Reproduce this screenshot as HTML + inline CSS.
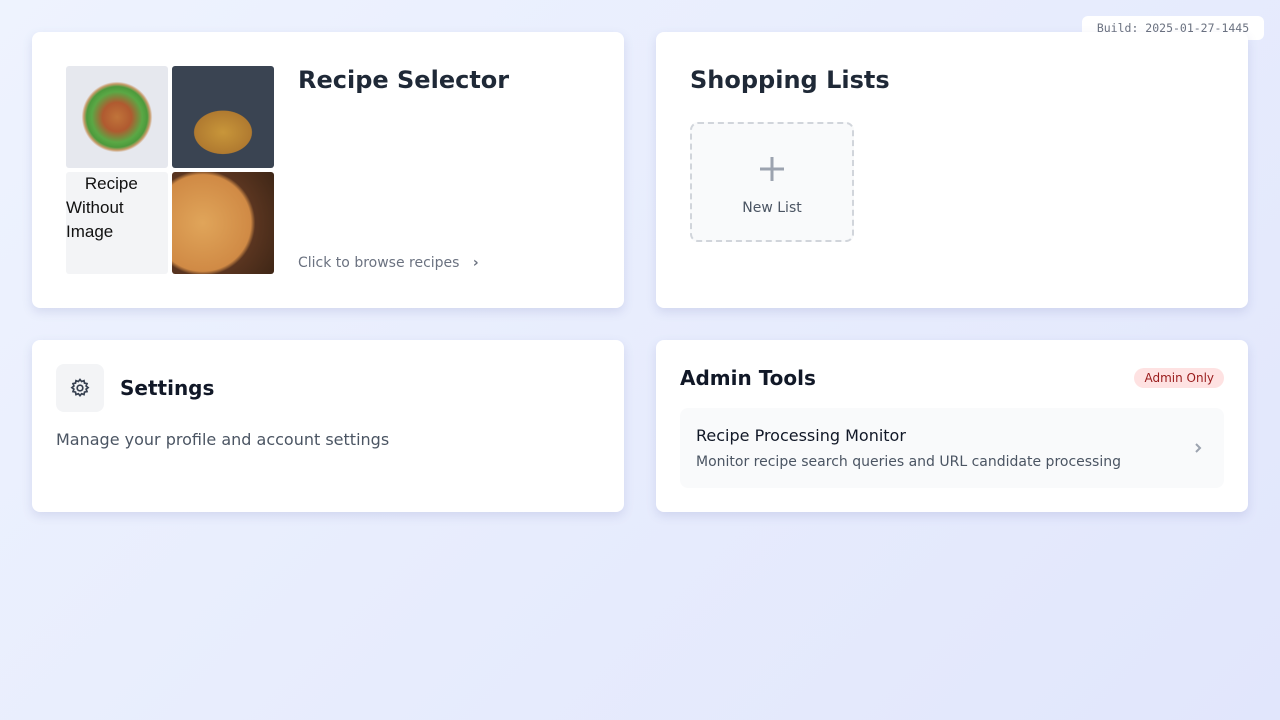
<!DOCTYPE html>
<html><head><style>
*{box-sizing:border-box;margin:0;padding:0}
body{width:1280px;height:720px;font-family:"DejaVu Sans","Liberation Sans",sans-serif;background:linear-gradient(135deg,#eef3fe,#e1e6fc);position:relative;overflow:hidden}
.card{position:absolute;background:#fff;border-radius:8px;box-shadow:0 4px 10px rgba(80,90,160,.15)}
.build{position:absolute;left:1082px;top:16px;width:182px;height:24px;background:#fff;border-radius:6px;font-family:"DejaVu Sans Mono",monospace;font-size:11.5px;color:#6b7280;line-height:24px;text-align:center}
.img{position:absolute;width:102px;height:102px;border-radius:3px;overflow:hidden}
</style></head><body>
<div class="build">Build: 2025-01-27-1445</div>

<div class="card" style="left:32px;top:32px;width:592px;height:276px">
 <div class="img" style="left:34px;top:34px;background:radial-gradient(circle at 50% 50%,#c0743a 0,#b05a30 20%,#5aa845 35%,#4c9a3c 42%,#c89a68 46%,#e6e8ee 49%)"></div>
 <div class="img" style="left:140px;top:34px;background:radial-gradient(ellipse 40% 30% at 50% 65%,#c8963a 0,#b07a30 70%,transparent 72%),#3a4452"></div>
 <div class="img" style="left:34px;top:140px;background:#f3f4f6;font-family:'Liberation Sans',sans-serif;font-size:17px;line-height:24px;color:#111">&nbsp;&nbsp;&nbsp;&nbsp;Recipe<br>Without<br>Image</div>
 <div class="img" style="left:140px;top:140px;background:radial-gradient(circle at 30% 50%,#e0a55a 0,#d08a45 55%,#5a3520 60%,#3e2616 100%)"></div>
 <div style="position:absolute;left:266px;top:34px;font-size:24px;font-weight:bold;color:#1f2937">Recipe Selector</div>
 <div style="position:absolute;left:266px;top:223px;font-size:14px;color:#6b7280">Click to browse recipes&nbsp;&nbsp;&nbsp;<b>›</b></div>
</div>

<div class="card" style="left:656px;top:32px;width:592px;height:276px">
 <div style="position:absolute;left:34px;top:34px;font-size:24px;font-weight:bold;color:#1f2937">Shopping Lists</div>
 <div style="position:absolute;left:34px;top:90px;width:164px;height:120px;border:2px dashed #d1d5db;border-radius:8px;background:#f9fafb;text-align:center">
  <svg width="30" height="30" viewBox="0 0 30 30" style="margin-top:30px;display:block;margin-left:auto;margin-right:auto"><path d="M15 3v24M3 15h24" stroke="#9ca3af" stroke-width="3"/></svg>
  <div style="font-size:14px;color:#4b5563;margin-top:16px">New List</div>
 </div>
</div>

<div class="card" style="left:32px;top:340px;width:592px;height:172px">
 <div style="position:absolute;left:24px;top:24px;width:48px;height:48px;border-radius:8px;background:#f3f4f6">
  <svg width="48" height="48" viewBox="0 0 48 48"><g fill="none" stroke="#374151" stroke-width="1.7"><circle cx="24" cy="24" r="2.8"/><path d="M24 15.5l1.6 2 2.4-.9.5 2.5 2.5.5-.9 2.4 2 1.6-2 1.6.9 2.4-2.5.5-.5 2.5-2.4-.9-1.6 2-1.6-2-2.4.9-.5-2.5-2.5-.5.9-2.4-2-1.6 2-1.6-.9-2.4 2.5-.5.5-2.5 2.4.9z"/></g></svg>
 </div>
 <div style="position:absolute;left:88px;top:36px;font-size:20px;font-weight:bold;color:#111827">Settings</div>
 <div style="position:absolute;left:24px;top:90px;font-size:16px;color:#4b5563">Manage your profile and account settings</div>
</div>

<div class="card" style="left:656px;top:340px;width:592px;height:172px">
 <div style="position:absolute;left:24px;top:26px;font-size:20px;font-weight:bold;color:#111827">Admin Tools</div>
 <div style="position:absolute;right:24px;top:28px;height:20px;padding:0 10px;border-radius:10px;background:#fee2e2;color:#991b1b;font-size:12px;line-height:20px">Admin Only</div>
 <div style="position:absolute;left:24px;top:68px;width:544px;height:80px;background:#f9fafb;border-radius:8px">
  <div style="position:absolute;left:16px;top:18px;font-size:16px;color:#111827">Recipe Processing Monitor</div>
  <div style="position:absolute;left:16px;top:46px;font-size:14px;color:#4b5563">Monitor recipe search queries and URL candidate processing</div>
  <svg style="position:absolute;right:22px;top:34px" width="8" height="12" viewBox="0 0 8 12"><path d="M2 2l4 4-4 4" fill="none" stroke="#9ca3af" stroke-width="2"/></svg>
 </div>
</div>
</body></html>
